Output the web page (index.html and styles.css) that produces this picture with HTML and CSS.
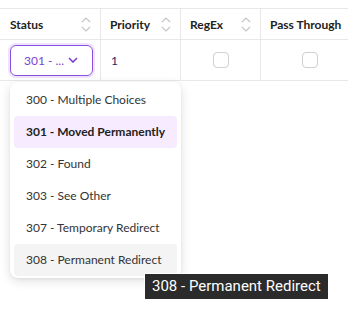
FILE: index.html
```html
<!DOCTYPE html>
<html>
<head>
    <title>Redirects</title>
    <meta charset="utf-8">
    <link rel="stylesheet" href="styles.css">
</head>
<body>
    <div class="table">
        <div class="row head">
            <div class="cell col-status">
                <span>Status</span>
                <svg class="sorter" width="12" height="18" viewBox="0 0 12 18">
                    <path d="M2 7 L6 3 L10 7" />
                    <path d="M2 12 L6 16 L10 12" />
                </svg>
            </div>
            <div class="cell col-priority">
                <span>Priority</span>
                <svg class="sorter" width="12" height="18" viewBox="0 0 12 18">
                    <path d="M2 7 L6 3 L10 7" />
                    <path d="M2 12 L6 16 L10 12" />
                </svg>
            </div>
            <div class="cell col-regex">
                <span>RegEx</span>
                <svg class="sorter" width="12" height="18" viewBox="0 0 12 18">
                    <path d="M2 7 L6 3 L10 7" />
                    <path d="M2 12 L6 16 L10 12" />
                </svg>
            </div>
            <div class="cell col-pass">
                <span>Pass Through</span>
            </div>
        </div>
        <div class="row body">
            <div class="cell col-status">
                <div class="select">
                    <span>301 - ...</span>
                    <svg width="10" height="6" viewBox="0 0 10 6">
                        <path d="M1 1 L5 5 L9 1" />
                    </svg>
                </div>
            </div>
            <div class="cell col-priority">
                <span class="priority">1</span>
            </div>
            <div class="cell col-regex center">
                <span class="checkbox"></span>
            </div>
            <div class="cell col-pass center">
                <span class="checkbox"></span>
            </div>
        </div>
    </div>

    <ul class="dropdown">
        <li>300 - Multiple Choices</li>
        <li class="selected">301 - Moved Permanently</li>
        <li>302 - Found</li>
        <li>303 - See Other</li>
        <li>307 - Temporary Redirect</li>
        <li class="hover">308 - Permanent Redirect</li>
    </ul>

    <div class="tooltip">308 - Permanent Redirect</div>
</body>
</html>
```

FILE: styles.css
```css
body {
    font-family: Lato, "Open Sans", sans-serif;
    margin: 0;
    padding: 8px 0 0 0;
    background-color: #ffffff;
    color: #333333;
    position: relative;
    width: 348px;
    height: 315px;
    overflow: hidden;
}
.table {
    width: 360px;
    border-top: 1px solid #e8e8e8;
}
.row {
    display: flex;
    border-bottom: 1px solid #e8e8e8;
}
.row.head {
    height: 30px;
    font-weight: bold;
    font-size: 12px;
    color: #222222;
}
.row.body {
    height: 40px;
}
.cell {
    display: flex;
    align-items: center;
    box-sizing: border-box;
    border-right: 1px solid #e8e8e8;
}
.col-status {
    width: 102px;
    padding-left: 10px;
    border-left: 1px solid #e8e8e8;
    margin-left: -1px;
}
.col-priority {
    width: 80px;
    padding-left: 9px;
}
.col-regex {
    width: 80px;
    padding-left: 9px;
}
.col-pass {
    width: 98px;
    padding-left: 9px;
    border-right: none;
}
.head .cell span {
    flex: 1;
}
.sorter {
    margin-right: 8px;
}
.sorter path {
    fill: none;
    stroke: #c4c4c4;
    stroke-width: 1.1;
}
.center {
    justify-content: center;
    padding-left: 0;
}
.select {
    width: 83px;
    height: 31px;
    box-sizing: border-box;
    border: 1px solid #8a4fe0;
    border-radius: 6px;
    box-shadow: 0 0 0 2px #efe4fd;
    display: flex;
    align-items: center;
    padding: 0 14px 0 13px;
    justify-content: space-between;
    color: #7c3fd6;
    font-size: 12px;
}
.select path {
    fill: none;
    stroke: #7c3fd6;
    stroke-width: 1.6;
}
.priority {
    font-size: 12px;
    color: #1d2a6b;
    padding-left: 1px;
}
.checkbox {
    width: 14px;
    height: 14px;
    border: 1px solid #d0d0d0;
    border-radius: 4px;
}
.dropdown {
    position: absolute;
    left: 10px;
    top: 82px;
    width: 171px;
    margin: 0;
    padding: 2px 4px;
    box-sizing: border-box;
    list-style: none;
    background: #ffffff;
    border-radius: 8px;
    box-shadow: 0 3px 12px rgba(0, 0, 0, 0.12), 0 1px 3px rgba(0, 0, 0, 0.06);
    font-size: 12px;
    color: #333333;
}
.dropdown li {
    height: 32px;
    line-height: 32px;
    padding-left: 12px;
    border-radius: 4px;
    white-space: nowrap;
}
.dropdown li.selected {
    background: #f6ebff;
    font-weight: bold;
    color: #222222;
}
.dropdown li.hover {
    background: #f4f4f4;
}
.tooltip {
    position: absolute;
    left: 144px;
    top: 273px;
    height: 25px;
    padding: 0 7px;
    background: #2b2b2b;
    color: #ffffff;
    font-family: Roboto, sans-serif;
    font-size: 15px;
    line-height: 25px;
    border: 1px solid #ffffff;
}
```
